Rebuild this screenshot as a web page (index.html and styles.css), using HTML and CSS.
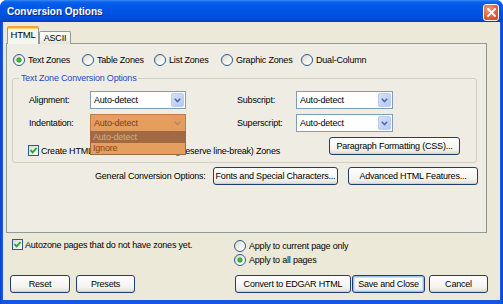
FILE: index.html
```html
<!DOCTYPE html>
<html lang="en">

<head>
  <meta charset="UTF-8" />
  <title>Conversion Options</title>
  <link rel="stylesheet" href="styles.css">
</head>

<body>
  <div class="window">
    <div class="titlebar">
      <span class="title">Conversion Options</span>
      <div class="close-btn">
        <svg width="9" height="9" viewBox="0 0 9 9"><path d="M1 1 L8 8 M8 1 L1 8" stroke="#fff" stroke-width="1.8" stroke-linecap="square" /></svg>
      </div>
    </div>

    <div class="client">
      <div class="tabs">
        <div class="tab active">HTML</div>
        <div class="tab">ASCII</div>
      </div>

      <div class="panel">
        <div class="zones">
          <label class="radio checked w-text"><span class="dot"></span>Text Zones</label>
          <label class="radio w-table"><span class="dot"></span>Table Zones</label>
          <label class="radio w-list"><span class="dot"></span>List Zones</label>
          <label class="radio w-graphic"><span class="dot"></span>Graphic Zones</label>
          <label class="radio"><span class="dot"></span>Dual-Column</label>
        </div>

        <fieldset class="group">
          <legend>Text Zone Conversion Options</legend>
          <div class="options">
            <span>Alignment:</span>
            <div class="select"><span>Auto-detect</span><i class="arrow"><svg width="7" height="5" viewBox="0 0 7 5"><path d="M0.8 0.8 L3.5 3.6 L6.2 0.8" /></svg></i></div>
            <span class="col-right">Subscript:</span>
            <div class="select"><span>Auto-detect</span><i class="arrow"><svg width="7" height="5" viewBox="0 0 7 5"><path d="M0.8 0.8 L3.5 3.6 L6.2 0.8" /></svg></i></div>

            <span>Indentation:</span>
            <div class="select open"><span>Auto-detect</span><i class="arrow"><svg width="7" height="5" viewBox="0 0 7 5"><path d="M0.8 0.8 L3.5 3.6 L6.2 0.8" /></svg></i>
              <ul class="list">
                <li class="hover">Auto-detect</li>
                <li>Ignore</li>
              </ul>
            </div>
            <span class="col-right">Superscript:</span>
            <div class="select"><span>Auto-detect</span><i class="arrow"><svg width="7" height="5" viewBox="0 0 7 5"><path d="M0.8 0.8 L3.5 3.6 L6.2 0.8" /></svg></i></div>
          </div>

          <div class="check-line">
            <label class="check checked"><span class="box"><svg width="9" height="9" viewBox="0 0 9 9"><path d="M1.5 4.2 L3.6 6.4 L7.6 2" /></svg></span>Create HTML PRE-Formatted Text (preserve line-break) Zones</label>
            <button class="btn para">Paragraph Formatting (CSS)...</button>
          </div>
        </fieldset>

        <div class="general">
          <span class="general-label">General Conversion Options:</span>
          <button class="btn fonts">Fonts and Special Characters...</button>
          <button class="btn advanced">Advanced HTML Features...</button>
        </div>
      </div>

      <div class="footer">
        <div class="footer-left">
          <label class="check checked autozone"><span class="box"><svg width="9" height="9" viewBox="0 0 9 9"><path d="M1.5 4.2 L3.6 6.4 L7.6 2" /></svg></span>Autozone pages that do not have zones yet.</label>
          <div class="buttons">
            <button class="btn reset">Reset</button>
            <button class="btn presets">Presets</button>
          </div>
        </div>
        <div class="footer-right">
          <label class="radio apply"><span class="dot"></span>Apply to current page only</label>
          <label class="radio checked apply"><span class="dot"></span>Apply to all pages</label>
          <div class="buttons">
            <button class="btn convert">Convert to EDGAR HTML</button>
            <button class="btn save default">Save and Close</button>
            <button class="btn cancel">Cancel</button>
          </div>
        </div>
      </div>
    </div>
  </div>
</body>

</html>
```

FILE: styles.css
```css
* {
  margin: 0;
  padding: 0;
  box-sizing: border-box;
}

body {
  width: 503px;
  height: 304px;
  overflow: hidden;
  background: #fff;
  font-family: "Liberation Sans", Arial, sans-serif;
  font-size: 9px;
  letter-spacing: -0.2px;
  color: #000;
}

.window {
  width: 503px;
  height: 304px;
  display: flex;
  flex-direction: column;
  background: linear-gradient(to right, #0A3FC8, #1656E4 2px, #1656E4 calc(100% - 2px), #0A3FC8);
  border-radius: 7px 7px 0 0;
  overflow: hidden;
}

/* title bar */
.titlebar {
  height: 22px;
  flex: none;
  display: flex;
  align-items: center;
  justify-content: space-between;
  padding: 0 4px 0 7px;
  background: linear-gradient(to bottom, #3A88F6 0, #0C62EC 2px, #0058E8 6px, #0054E3 50%, #0150DD 80%, #0146CF 95%, #033AB5 100%);
}

.title {
  color: #fff;
  font-size: 10px;
  font-weight: bold;
  letter-spacing: 0;
  text-shadow: 1px 1px 0 #0A2A8E;
  margin-top: 1px;
}

.close-btn {
  width: 16px;
  height: 17px;
  margin-top: 2px;
  border: 1px solid #fff;
  border-radius: 3px;
  background: radial-gradient(circle at 35% 30%, #F09C80, #E0613F 55%, #C9401F);
  display: flex;
  align-items: center;
  justify-content: center;
}

/* dialog body */
.client {
  flex: 1;
  margin: 0 3px 4px;
  background: #ECE9D8;
  padding-top: 4px;
  display: flex;
  flex-direction: column;
}

.tabs {
  display: flex;
  align-items: flex-end;
  margin-left: 4px;
  height: 18px;
  position: relative;
  z-index: 2;
}

.tab {
  width: 32px;
  height: 13px;
  border: 1px solid #919B9C;
  border-bottom: none;
  border-radius: 2px 2px 0 0;
  background: linear-gradient(#FFFFFF, #F3F2EC 60%, #E6E4DA);
  text-align: center;
  line-height: 12px;
}

.tab.active {
  height: 18px;
  width: 32px;
  background: #F6F5EF;
  border-top: 2px solid #F1A53A;
  box-shadow: inset 0 1px 0 #FFD46A;
  line-height: 14px;
  font-size: 9.5px;
}

.panel {
  width: 481px;
  height: 190px;
  margin: -1px 0 0 3px;
  border: 1px solid #919B9C;
  border-right-color: #8A9394;
  background: #EFEDE3;
}

/* radios and checkboxes */
.radio {
  display: flex;
  align-items: center;
  gap: 3px;
  height: 12px;
  white-space: nowrap;
}

.radio .dot {
  flex: none;
  width: 12px;
  height: 12px;
  border-radius: 50%;
  border: 1px solid #2A5B8C;
  background: linear-gradient(135deg, #D8D6CC, #F6F5F1 60%, #FFFFFF);
}

.radio.checked .dot {
  background: radial-gradient(circle, #5FCB4E 0, #2E9E2A 2.2px, transparent 3px), linear-gradient(135deg, #D8D6CC, #F6F5F1 60%, #FFFFFF);
}

.check {
  display: flex;
  align-items: center;
  gap: 2px;
  white-space: nowrap;
}

.check .box {
  flex: none;
  width: 11px;
  height: 11px;
  border: 1px solid #2A5B8C;
  background: linear-gradient(135deg, #DCDAD0, #FFFFFF);
  display: flex;
  align-items: center;
  justify-content: center;
}

.check .box path {
  fill: none;
  stroke: #27A227;
  stroke-width: 1.8;
}

.zones {
  display: flex;
  padding: 10px 0 0 6px;
}

.w-text { width: 69px; }
.w-table { width: 72px; }
.w-list { width: 67px; }
.w-graphic { width: 80px; }

/* group box */
.group {
  width: 465px;
  margin: 6px 0 0 5px;
  border: 1px solid #D0D0BF;
  border-radius: 3px;
  padding: 7px 16px 6px 6px;
}

.group legend {
  color: #1A4BC4;
  padding: 0 2px;
  line-height: 12px;
}

.options {
  display: grid;
  grid-template-columns: 61px 96px 51px 59px 97px;
  grid-auto-rows: 18px;
  row-gap: 5px;
  align-items: center;
  padding-left: 10px;
}

.options .col-right {
  grid-column: 4;
}

.select {
  position: relative;
  height: 18px;
  border: 1px solid #7F9DB9;
  background: #fff;
  display: flex;
  align-items: center;
  padding-left: 3px;
}

.select .arrow {
  margin-left: auto;
  margin-right: 1px;
  width: 13px;
  height: 14px;
  border: 1px solid #B9CCF5;
  border-radius: 2px;
  background: linear-gradient(135deg, #D4E0FC, #B5C9F7);
  display: flex;
  align-items: center;
  justify-content: center;
}

.select .arrow path {
  fill: none;
  stroke: #4D6A9E;
  stroke-width: 1.5;
}

.select.open {
  background: #E49E5E;
  border-color: #C07C46;
  color: #7A4216;
}

.select.open .arrow {
  background: #E19D5F;
  border-color: #E19D5F;
}

.select.open .arrow path {
  stroke: #BE875A;
}

.list {
  position: absolute;
  top: 16px;
  left: -1px;
  right: -1px;
  z-index: 5;
  list-style: none;
  border: 1px solid #A06A3E;
  background: #E49E5E;
}

.list li {
  height: 11px;
  line-height: 11px;
  padding-left: 2px;
  color: #874717;
}

.list li.hover {
  background: #A26A42;
  color: #D4A97F;
}

.check-line {
  display: flex;
  align-items: flex-start;
  margin-top: 5px;
  padding-left: 9px;
}

.check-line .check {
  margin-top: 8px;
}

/* buttons */
.btn {
  height: 18px;
  border: 1px solid #1F3F6E;
  border-radius: 3px;
  background: linear-gradient(#FFFFFF, #F4F3EE 70%, #E2DED3);
  box-shadow: inset 0 -1px 0 #D6D0C5;
  font: inherit;
  letter-spacing: inherit;
  color: #000;
  text-align: center;
}

.btn.default {
  box-shadow: inset 0 0 0 1px #9DBBEB, inset 0 0 0 2px #CFE0F8;
}

.para {
  width: 131px;
  margin-left: auto;
}

.general {
  display: flex;
  align-items: center;
  margin-top: 4px;
  padding-left: 88px;
}

.general-label {
  width: 118px;
}

.fonts { width: 125px; }

.advanced {
  width: 130px;
  margin-left: 10px;
}

/* footer */
.footer {
  display: flex;
  justify-content: space-between;
  padding: 5px 12px 0 7px;
}

.footer .buttons {
  display: flex;
}

.autozone {
  height: 13px;
  margin-left: 2px;
}

.footer-left .buttons {
  margin-top: 24px;
  gap: 6px;
}

.reset { width: 60px; }
.presets { width: 59px; }

.footer-right {
  width: 253px;
}

.apply {
  margin: 2px 0 0 -1px;
}

.footer-right .buttons {
  margin-top: 9px;
}

.convert { width: 116px; }

.save {
  width: 73px;
  margin-left: 1px;
}

.cancel {
  width: 59px;
  margin-left: 4px;
}
```
